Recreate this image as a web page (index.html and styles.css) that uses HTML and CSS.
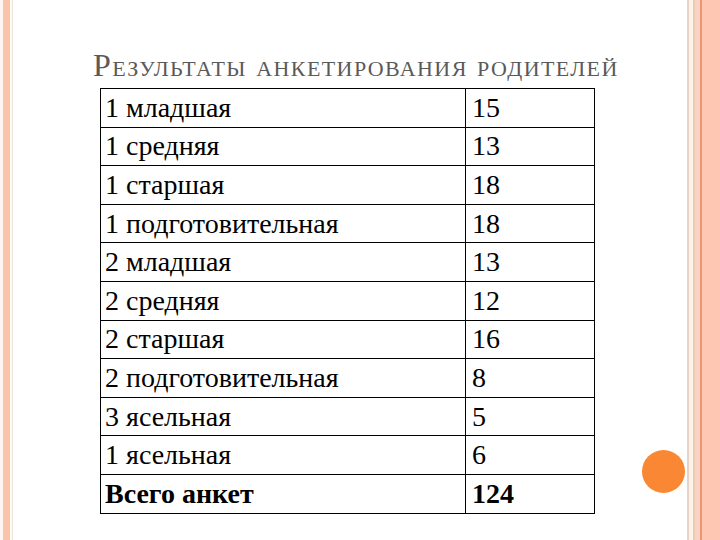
FILE: index.html
```html
<!DOCTYPE html>
<html lang="ru">
<head>
<meta charset="utf-8">
<title>Результаты анкетирования родителей</title>
<link rel="stylesheet" href="styles.css">
</head>
<body>
<div class="slide">
  <h1 class="title">Результаты анкетирования родителей</h1>
  <table class="results">
    <tr><td class="name">1 младшая</td><td class="num">15</td></tr>
    <tr><td class="name">1 средняя</td><td class="num">13</td></tr>
    <tr><td class="name">1 старшая</td><td class="num">18</td></tr>
    <tr><td class="name">1 подготовительная</td><td class="num">18</td></tr>
    <tr><td class="name">2 младшая</td><td class="num">13</td></tr>
    <tr><td class="name">2 средняя</td><td class="num">12</td></tr>
    <tr><td class="name">2 старшая</td><td class="num">16</td></tr>
    <tr><td class="name">2 подготовительная</td><td class="num">8</td></tr>
    <tr><td class="name">3 ясельная</td><td class="num">5</td></tr>
    <tr><td class="name">1 ясельная</td><td class="num">6</td></tr>
    <tr class="total"><td class="name">Всего анкет</td><td class="num">124</td></tr>
  </table>
  <div class="dot"></div>
</div>
</body>
</html>
```
FILE: styles.css
```css
html, body {
  margin: 0;
  padding: 0;
}
body {
  width: 720px;
  height: 540px;
  overflow: hidden;
  background: #ffffff;
  font-family: "Liberation Serif", "Times New Roman", serif;
}
.slide {
  position: relative;
  width: 720px;
  height: 540px;
  box-sizing: border-box;
  padding: 45px 0 0 100px;
  background:
    linear-gradient(to right,
      #fdf6f0 0, #fdf6f0 3px,
      #fcc3ab 3px, #fcc3ab 10px,
      #fffaf5 10px, #fffaf5 12px,
      #f3e2d6 12px, #f3e2d6 13px,
      #ffffff 13px, #ffffff 687px,
      #e9d2c4 687px, #e9d2c4 689px,
      #fdf3e8 689px, #fdf3e8 693px,
      #eccab8 693px, #eccab8 695px,
      #fbd3c3 695px, #fbd3c3 700px,
      #ec9574 700px, #ec9574 702px,
      #fdc7b3 702px, #fdc7b3 720px);
}
.title {
  margin: 0 0 0 -7px;
  font-weight: normal;
  font-size: 32px;
  line-height: 40px;
  height: 37px;
  font-variant: small-caps;
  color: #5a5a5a;
  letter-spacing: 1.4px;
  white-space: nowrap;
}
.results {
  margin-top: 6px;
  border-collapse: collapse;
  width: 495px;
}
.results td {
  border: 1px solid #000;
  height: 37.6px;
  padding: 0 0 0 4px;
  font-size: 28px;
  line-height: 30px;
  color: #000;
  vertical-align: middle;
}
.results td.name {
  width: 360px;
}
.results td.num {
  padding-left: 6px;
}
.results .total td {
  font-weight: bold;
}
.dot {
  position: absolute;
  left: 642px;
  top: 450px;
  width: 43px;
  height: 43px;
  border-radius: 50%;
  background: #f98733;
}
```
